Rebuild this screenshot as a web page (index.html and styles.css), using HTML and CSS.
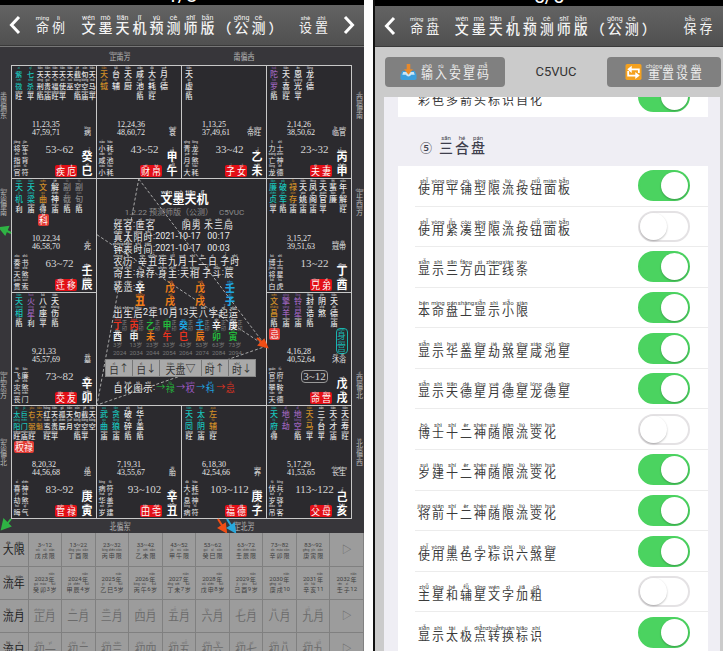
FILE: index.html
```html
<!DOCTYPE html>
<html lang="zh-CN">
<head>
<meta charset="utf-8">
<title>文墨天机</title>
<link rel="stylesheet" href="styles.css">
</head>
<body>
<main class="screens">
  <section class="screen chart-screen">
    <div class="counter">1/8</div>
    <header class="bar">
      <button class="nav" aria-label="返回"><svg viewBox="0 0 12 20"><path d="M10 2 2.500 10 10 18"/></svg></button>
      <a class="bar-link zh" href="#">命例</a>
      <h1 class="bar-title zh">文墨天机预测师版（公测）</h1>
      <a class="bar-link zh" href="#">设置</a>
      <button class="nav" aria-label="前进"><svg viewBox="0 0 12 20"><path d="M2 2 9.500 10 2 18"/></svg></button>
    </header>
    <div class="chart">
      <div class="edge edge-top"><span class="zh">正南方</span><span class="zh">南偏西</span></div>
      <div class="edge edge-side edge-left"><div class="side-group"><span class="zh">南偏东</span><span class="zh">东偏南</span></div><div class="side-group"><span class="zh">正东方</span><span class="zh">东偏北</span></div></div>
      <div class="palaces" id="palaces">
        <div class="center">
          <svg class="rays" viewBox="0 0 170 227" preserveAspectRatio="none"><path d="M42 0 170 168 0 227ZM0 56 170 168"/></svg>
          <h2 class="center-title zh">文墨天机</h2>
          <p class="version">1.2.22 预测师版（公测）&nbsp;&nbsp; C5VUC</p>
          <div class="info">
            <p><span class="zh">姓名:匿名</span><span class="zh far">阴男 木三局</span></p>
            <p class="zh">真太阳时:2021-10-17&nbsp;&nbsp; 00:17</p>
            <p class="zh">钟表时间:2021-10-17&nbsp;&nbsp; 00:03</p>
            <p class="zh">农历: 辛丑年九月十二日 子时</p>
            <p class="zh">命主:禄存 身主:天相 子斗:辰</p>
          </div>
          <div class="pillars">
            <span class="zh pillar-label">乾造:</span>
            <span class="zh pillar"><b class="white">辛</b><b class="orange">丑</b></span>
            <span class="zh pillar orange">戊戌</span>
            <span class="zh pillar orange">戊戌</span>
            <span class="zh pillar"><b class="blue">壬</b><b class="blue">子</b></span>
          </div>
          <p class="luck-title zh">出生后2年10月13天八字起运</p>
          <div class="luck" id="luck"></div>
          <div class="steps">
            <button class="zh">日↑</button><button class="zh">日↓</button><button class="zh wide">天盘▽</button><button class="zh">时↑</button><button class="zh">时↓</button>
          </div>
          <p class="legend"><span class="zh">自化图示:</span><span class="zh green">→禄</span><span class="zh purple">→权</span><span class="zh blue">→科</span><span class="zh red">→忌</span></p>
        </div>
      </div>
      <div class="edge edge-side edge-right"><div class="side-group"><span class="zh">西偏南</span><span class="zh">正西方</span></div><div class="side-group"><span class="zh">西偏北</span><span class="zh">北偏西</span></div></div>
      <div class="edge edge-bottom"><span class="zh">北偏东</span><span class="zh">正北方</span></div>
      <svg class="arrows" viewBox="0 0 364 486" preserveAspectRatio="none">
        <g stroke="#2fb344" fill="#2fb344"><path d="M11 186 5 183"/><path d="M0 181 8 180 5 187Z"/><path d="M11 472 7 477"/><path d="M2 482 4 473 10 479Z"/></g>
        <g stroke="#f04e16" fill="#f04e16"><path d="M257 291 263 296"/><path d="M267 300 259 298 264 293Z"/><path d="M218 472 223 480"/><path d="M226 485 219 481 225 477Z"/></g>
        <g stroke="#29a8dc" fill="#29a8dc"><path d="M227 472 232 480"/><path d="M235 485 228 481 234 477Z"/></g>
      </svg>
    </div>
    <table class="periods">
      <tbody id="periods"></tbody>
    </table>
  </section>

  <section class="screen settings-screen">
    <div class="counter">5/5</div>
    <header class="bar">
      <button class="nav" aria-label="返回"><svg viewBox="0 0 12 20"><path d="M10 2 2.500 10 10 18"/></svg></button>
      <a class="bar-link zh" href="#">命盘</a>
      <h1 class="bar-title zh">文墨天机预测师版（公测）</h1>
      <a class="bar-link save zh" href="#">保存</a>
    </header>
    <div class="tools">
      <button class="tool">
        <svg class="emoji" viewBox="0 0 18 18"><path d="M2 8h14l2 4v4q0 2-2 2H2q-2 0-2-2v-4z" fill="#3c9fdc"/><path d="M3 9h12l1 3h-4q-1 2-3 2t-3-2H2z" fill="#c9e6f7"/><path d="M7 0h4v6h3l-5 6-5-6h3z" fill="#e8892b"/></svg>
        <span class="zh">输入安星码</span>
      </button>
      <span class="code">C5VUC</span>
      <button class="tool">
        <svg class="emoji" viewBox="0 0 18 18"><rect width="18" height="18" rx="2" fill="#f4a11f"/><path d="M15 10V6H6M3 8v5h9" fill="none" stroke="#fff" stroke-width="2"/><path d="M7 2v8L2 6zM11 9v8l5-4z" fill="#fff"/></svg>
        <span class="zh">重置设置</span>
      </button>
    </div>
    <div class="panel">
      <div class="list list-tail">
        <div class="row"><label class="zh" for="s0">彩色多箭头标识自化</label><input id="s0" type="checkbox" checked></div>
      </div>
      <h2 class="section"><span>⑤</span><span class="zh">三合盘</span></h2>
      <div class="list list-main">
        <div class="row"><label class="zh" for="s1">使用平铺型限流按钮面板</label><input id="s1" type="checkbox" checked></div>
        <div class="row"><label class="zh" for="s2">使用紧凑型限流按钮面板</label><input id="s2" type="checkbox"></div>
        <div class="row"><label class="zh" for="s3">显示三方四正线条</label><input id="s3" type="checkbox" checked></div>
        <div class="row"><label class="zh" for="s4">本命盘上显示小限</label><input id="s4" type="checkbox" checked></div>
        <div class="row"><label class="zh" for="s5">显示华盖星劫煞星咸池星</label><input id="s5" type="checkbox" checked></div>
        <div class="row"><label class="zh" for="s6">显示天德星月德星龙德星</label><input id="s6" type="checkbox" checked></div>
        <div class="row"><label class="zh" for="s7">博士十二神随限流变化</label><input id="s7" type="checkbox"></div>
        <div class="row"><label class="zh" for="s8">岁建十二神随限流变化</label><input id="s8" type="checkbox" checked></div>
        <div class="row"><label class="zh" for="s9">将前十二神随限流变化</label><input id="s9" type="checkbox" checked></div>
        <div class="row"><label class="zh" for="s10">使用黑色字标识六煞星</label><input id="s10" type="checkbox" checked></div>
        <div class="row"><label class="zh" for="s11">主星和辅星文字加粗</label><input id="s11" type="checkbox"></div>
        <div class="row"><label class="zh" for="s12">显示太极点转换标识</label><input id="s12" type="checkbox" checked></div>
      </div>
    </div>
  </section>
</main>
<script src="app.js"></script>
</body>
</html>
```
FILE: styles.css
```css
* { box-sizing: border-box; margin: 0; padding: 0; }
html, body { height: 100%; }
body { background: #fdfdfd; overflow: hidden; font-family: Roboto, "Noto Sans CJK SC", sans-serif; font-size: 12px; }
button { font: inherit; color: inherit; border: 0; background: none; }
a { color: inherit; text-decoration: none; }

/* Characters with their pinyin above */
ruby { display: inline-flex; flex-direction: column-reverse; align-items: center; width: var(--w); vertical-align: bottom; white-space: nowrap; }
ruby > span { line-height: var(--h); height: var(--h); }
rt { display: block; font-size: var(--rt); line-height: var(--rt); height: var(--rh); font-weight: 400; }

.screens { display: grid; grid-template-columns: 364fr 350fr; column-gap: 9px; height: 100%; }
.screen { display: flex; flex-direction: column; min-width: 0; min-height: 0; overflow: hidden; }
.settings-screen { border-left: 2px solid #111; background: #cbcbcb; }
.counter { height: 6px; flex: none; background: #000; color: #fff; font-size: 20px; line-height: 20px; text-align: center; display: flex; align-items: flex-end; justify-content: center; }
.chart-screen .counter { height: 5px; }

.bar { height: 41px; flex: none; display: flex; align-items: center; justify-content: space-between; padding: 0 9px; color: #f4f4f4; background: linear-gradient(#636363, #505050); border-bottom: 1px solid #3a3a3a; }
.nav { width: 12px; height: 20px; }
.nav svg { display: block; width: 12px; height: 20px; fill: none; stroke: #fff; stroke-width: 3; }
.bar-link { --w: 16px; --h: 14px; --rt: 6px; --rh: 6px; font-size: 13px; }
.bar-title { --w: 17px; --h: 14px; --rt: 7px; --rh: 6px; font-size: 14px; font-weight: 500; white-space: nowrap; }
.bar .bar-link, .bar .bar-title { padding-bottom: 1px; }
.save { margin-left: 12px; }

/* Star chart */
.chart { position: relative; flex: none; display: grid; grid-template-columns: 11px 1fr 12px; grid-template-rows: 18px auto 14px; background: #37363a; color: #e8e8e8; border-top: 1px solid #777; }
.edge { --w: 7px; --h: 6px; --rt: 3px; --rh: 3px; font-size: 7px; color: #b8b8b8; }
.edge-top, .edge-bottom { grid-column: 1 / -1; display: flex; align-items: center; justify-content: center; gap: 103px; }
.edge-side { display: flex; flex-direction: column; justify-content: space-between; padding: 27px 0 53px; }
.edge-side .zh { width: 7px; display: flex; flex-direction: column; }
.edge-right { align-items: flex-end; padding-right: 1px; }
.side-group { display: flex; flex-direction: column; gap: 70px; }
.side-group + .side-group { gap: 40px; }
.palaces { display: grid; grid-template-columns: repeat(4, minmax(0, 1fr)); grid-template-rows: 113px 114px 113px 113px; border: solid #c8c8c8; border-width: 1px 0 0 1px; background: #2b2a2e; }
.palace { display: grid; grid-template-columns: minmax(0, 1fr); grid-template-rows: 1fr 17px 41px; border: solid #c8c8c8; border-width: 0 1px 1px 0; min-width: 0; overflow: hidden; }
.stars { display: flex; padding: 1px 0 0 1px; --w: 8px; --h: 8px; --rt: 3px; --rh: 4px; font-size: 8px; }
.star { width: 12px; flex: 0 1 auto; display: flex; flex-direction: column; align-items: center; min-width: 0; color: #e6e6e6; }
.star .zh { display: flex; flex-direction: column; font-weight: 500; }
.row8 .star { width: 10px; }
.many, .crowded { --w: 7px; font-size: 7px; }
.many .star { flex: 7 1 0; }
.many .star.major { flex: 11 1 0; }
.crowded .star { flex: 1 1 0; }
.grade { --w: 7px; --h: 7px; --rt: 3px; --rh: 3px; font-size: 7px; min-height: 10px; display: block; }
.star .teal { color: #19c5bd; }
.star .gold { color: #d08f28; }
.star .purple { color: #9c64bb; }
.star .dim { color: #858585; }
.hua { --w: 9px; --h: 9px; --rt: 3px; --rh: 3px; font-size: 9px; background: #e23a34; color: #fff; border-radius: 2px; padding: 0 1px; white-space: nowrap; display: block; }
.hua-row { display: flex; align-items: flex-start; justify-content: space-between; padding: 0 3px 0 2px; }
.top { min-height: 0; }
.body-mark { --w: 9px; --h: 9px; --rt: 3px; --rh: 3px; font-size: 9px; color: #19b5ae; border: 1px solid #19b5ae; border-radius: 4px; width: 12px; margin-left: auto; display: flex; flex-direction: column; }
.middle { display: flex; justify-content: space-between; align-items: flex-end; padding: 0 5px 0 20px; }
.ages { font: 8px/8px "Liberation Serif", serif; white-space: pre; }
.phase { --w: 7px; --h: 7px; --rt: 3px; --rh: 3px; font-size: 7px; }
.foot { display: grid; grid-template-columns: 16px 1fr 14px; padding: 4px 1px 1px 1px; }
.gods { --w: 8px; --h: 8px; --rt: 3px; --rh: 4px; font-size: 7px; display: flex; flex-direction: column; }
.gods .zh { display: flex; }
.span { display: flex; flex-direction: column; align-items: center; justify-content: space-between; padding-left: 9px; }
.range { font: 11px/13px "Liberation Serif", serif; color: #d5d5d5; padding: 0 1px; margin-top: 2px; white-space: nowrap; }
.range.boxed { border: 1px solid #999; border-radius: 4px; line-height: 11px; }
.name { --w: 11px; --h: 9px; --rt: 3px; --rh: 3px; font-size: 9px; background: #e20f16; color: #fff; border-radius: 2px; margin-left: 13px; white-space: nowrap; }
.stem { --w: 12px; --h: 10px; --rt: 4px; --rh: 4px; font-size: 11px; font-weight: 700; color: #fff; display: flex; flex-direction: column; justify-content: flex-end; }

.center { grid-area: 2 / 2 / 4 / 4; position: relative; border: solid #c8c8c8; border-width: 0 1px 1px 0; padding: 10px 10px 0 16px; --w: 10px; --h: 8px; --rt: 4px; --rh: 4px; font-size: 9px; line-height: 12px; color: #ededed; }
.center > * { position: relative; }
.center .rays { position: absolute; inset: 0; width: 100%; height: 100%; fill: none; stroke: #a8a8a8; stroke-width: 1; stroke-dasharray: 3 2; }
.center-title { --w: 12px; --h: 13px; --rt: 6px; --rh: 5px; font-size: 12px; font-weight: 700; line-height: 18px; color: #fff; text-align: center; }
.version { font-size: 8px; line-height: 11px; color: #8d8d8d; text-align: center; white-space: nowrap; }
.info p, .luck-title, .legend { white-space: nowrap; height: 12px; }
.info .far { margin-left: 26px; }
.pillars { display: flex; padding-top: 2px; gap: 20px; height: 28px; }
.pillars .zh { --h: 9px; }
.pillar-label { width: 22px; margin-right: -20px; white-space: nowrap; }
.pillar { display: flex; flex-direction: column; width: 10px; font-size: 10px; font-weight: 700; }
.pillar b { display: block; height: 13px; }
.luck { display: grid; grid-template-columns: repeat(8, 1fr); width: 132px; padding-top: 1px; }
.cycle { --w: 9px; --h: 8px; --rt: 3px; --rh: 3px; line-height: 8px; }
.cycle-main { display: flex; }
.cycle-main .zh { display: flex; flex-direction: column; font-weight: 700; }
.cycle-main .ten { font-size: 5px; line-height: 6px; color: #888; }
.cycle small { display: block; font-size: 6px; line-height: 8px; color: #777; }
.steps { display: flex; margin: 2px 0 4px -8px; width: 151px; background: #a9a9a9; border: 1px solid #888; color: #333; }
.steps button { flex: 27; height: 16px; border-right: 1px solid #777; --h: 9px; --w: 10px; font-size: 10px; }
.steps .wide { flex: 42; }
.steps button:last-child { border: 0; }
.legend { display: flex; gap: 1px; }
.white { color: #eee; } .orange { color: #ee7d1a; } .blue { color: #20a5e0; } .red { color: #e8331f; } .green { color: #24b83c; } .purple { color: #a05cc8; }
.arrows { position: absolute; inset: 0; width: 100%; height: 100%; stroke-width: 2; pointer-events: none; }

/* Periods */
.periods { width: 100%; table-layout: fixed; border-collapse: collapse; background: #9c9c9c; color: #404040; flex: none; }
.periods th { width: 28px; --w: 11px; --h: 12px; --rt: 4px; --rh: 4px; font-size: 11px; font-weight: 400; color: #222; }
.periods th, .periods td { height: 33px; border: solid #808080; border-width: 0 1px 1px 0; text-align: center; vertical-align: middle; white-space: nowrap; overflow: hidden; }
.periods td { --w: 7px; --h: 7px; --rt: 3px; --rh: 3px; font-size: 6px; line-height: 9px; }
.periods .month { --w: 11px; --h: 12px; --rt: 4px; --rh: 4px; font-size: 11px; color: #6b6b6b; line-height: 16px; }
.periods .next { font-size: 10px; color: #666; }

/* Settings */
.tools { height: 50px; flex: none; display: flex; align-items: center; justify-content: space-between; padding: 0 2px 0 10px; }
.tool { height: 30px; border-radius: 4px; background: #808080; color: #eee; display: flex; align-items: center; justify-content: center; gap: 3px; width: 120px; --w: 14px; --h: 13px; --rt: 6px; --rh: 6px; font-size: 12px; }
.code + .tool { width: 114px; gap: 5px; }
.emoji { width: 17px; height: 16px; }
.code { font-size: 13px; line-height: 16px; color: #333; }
.panel { flex: 1; min-height: 0; margin: 0 3px 0 9px; padding: 0 12px 0 14px; background: #efeef4; display: flex; flex-direction: column; }
.list { background: #fff; }
.list-tail { flex: none; height: 20px; overflow: hidden; display: flex; align-items: flex-end; }
.list-tail .row { flex: 1; height: 41px; border: 0; }
.section { flex: none; height: 49px; padding: 8px 0 0 22px; display: flex; align-items: center; gap: 6px; --w: 16px; --h: 15px; --rt: 6px; --rh: 6px; font-size: 14px; font-weight: 500; color: #3f3f4d; }
.section > span:first-child { font-size: 12px; padding-top: 4px; }
.list-main { flex: 1; min-height: 0; margin-bottom: -2px; display: grid; grid-template-rows: repeat(12, 1fr); }
.row { margin-left: 17px; padding: 0 18px 0 2px; display: flex; align-items: center; justify-content: space-between; border-bottom: 1px solid #ececec; min-height: 0; }
.row label { --w: 14px; --h: 13px; --rt: 6px; --rh: 6px; font-size: 12px; color: #3a3a3a; white-space: nowrap; padding-top: 4px; }
.row input { appearance: none; flex: none; width: 52px; height: 31px; border-radius: 16px; border: 2px solid #e4e2e4; background: #fff; display: flex; }
.row input::before { content: ""; width: 27px; height: 27px; border-radius: 50%; background: #fff; box-shadow: 0 1px 2px #0004; }
.row input:checked { background: #4bd360; border-color: #4bd360; justify-content: flex-end; }
```
FILE: app.js
```js
const PINYIN = {};
("命mìng 例lì 文wén 墨mò 天tiān 机jī 预yù 测cè 师shī 版bǎn 公gōng 设shè 置zhì 盘pán 保bǎo 存cún 输shū 入rù 安ān 星xīng 码mǎ 重chóng " +
 "彩cǎi 色sè 多duō 箭jiàn 头tóu 标biāo 识shí 自zì 化huà 三sān 合hé 使shǐ 用yòng 平píng 铺pù 型xíng 限xiàn 流liú 按àn 钮niǔ 面miàn 板bǎn " +
 "紧jǐn 凑còu 显xiǎn 示shì 方fāng 四sì 正zhèng 线xiàn 条tiáo 本běn 上shàng 小xiǎo 华huá 盖gài 劫jié 煞shà 咸xián 池chí 德dé 月yuè 龙lóng " +
 "博bó 士shì 十shí 二èr 神shén 随suí 变biàn 岁suì 建jiàn 将jiàng 前qián 黑hēi 字zì 六liù 主zhǔ 和hé 辅fǔ 加jiā 粗cū 太tài 极jí 点diǎn " +
 "转zhuǎn 换huàn 南nán 偏piān 西xī 东dōng 北běi 姓xìng 名míng 匿nì 阴yīn 男nán 木mù 局jú 真zhēn 阳yáng 时shí 钟zhōng 表biǎo 间jiān 农nóng " +
 "历lì 辛xīn 丑chǒu 年nián 九jiǔ 日rì 子zǐ 禄lù 身shēn 相xiàng 斗dǒu 辰chén 乾qián 造zào 戊wù 戌xū 壬rén 出chū 生shēng 后hòu 八bā 起qǐ " +
 "运yùn 图tú 权quán 科kē 忌jì 丁dīng 酉yǒu 丙bǐng 申shēn 乙yǐ 未wèi 甲jiǎ 午wǔ 癸guǐ 巳sì 卯mǎo 庚gēng 寅yín 己jǐ 亥hài 大dà 一yī " +
 "五wǔ 七qī 初chū 紫zǐ 微wēi 杀shā 旺wàng 刑xíng 陷xiàn 马mǎ 福fú 巫wū 空kōng 截jié 旬xún 破pò 碎suì 庙miào 贵guì 官guān 符fú 指zhǐ 背bèi " +
 "军jūn 病bìng 疾jí 厄è 钺yuè 台tái 厨chú 耗hào 衰shuāi 财cái 帛bó 虚xū 青qīng 帝dì 女nǚ 陀tuó 罗luó 喜xǐ 恩ēn 光guāng 力lì 亡wáng 临lín " +
 "夫fū 妻qī 梁liáng 曲qǔ 解jiě 副fù 利lì 得dé 奏zòu 书shū 贯guàn 索suǒ 死sǐ 迁qiān 移yí 廉lián 贞zhēn 姚yáo 凤fèng 阁gé 蜚fēi 冠guān 带dài " +
 "白bái 虎hǔ 兄xiōng 弟dì 火huǒ 座zuò 伤shāng 飞fēi 灾zāi 丧sàng 门mén 墓mù 交jiāo 友yǒu 昌chāng 擎qíng 羊yáng 铃líng 封fēng 诰gào 府fǔ " +
 "攀pān 鞍ān 沐mù 浴yù 宫gōng 巨jù 右yòu 弼bì 魁kuí 红hóng 鸾luán 孤gū 晦huì 气qì 绝jué 武wǔ 贪tān 狼láng 胎tāi 田tián 宅zhái " +
 "同tóng 左zuǒ 息xī 养yǎng 地dì 才cái 寿shòu 伏fú 兵bīng 驿yì 吊diào 客kè 长zhǎng 父fù 母mǔ")
  .split(" ").forEach(e => { PINYIN[e[0]] = e.slice(1); });

const el = (cls, html = "", tag = "div") => `<${tag} class="${cls}">${html}</${tag}>`;
const zh = (text, cls = "") => el("zh " + cls, text, "span");

/* Stars: name, grade, colour */
const palaces = [
  { at: "1/1", stars: "紫微旺teal 七杀平teal 天刑陷 天贵庙 天福旺 天使平 天巫 截空陷 旬空庙 天马平", ages: "11,23,35\n47,59,71", phase: "病", gods: "将军 指背 官符", range: "53~62", name: "疾厄", stem: "癸巳", mode: "many" },
  { at: "1/2", stars: "天钺-gold 台辅 天厨 咸池陷 大耗旺 月德", ages: "12,24,36\n48,60,72", phase: "衰", gods: "小耗 咸池 小耗", range: "43~52", name: "财帛", stem: "甲午" },
  { at: "1/3", stars: "天虚陷", ages: "1,13,25\n37,49,61", phase: "帝旺", gods: "青龙 月煞 大耗", range: "33~42", name: "子女", stem: "乙未" },
  { at: "1/4", stars: "陀罗陷purple 天喜旺 恩光平 龙德", ages: "2,14,26\n38,50,62", phase: "临官", gods: "力士 亡神 龙德", range: "23~32", name: "夫妻", stem: "丙申" },
  { at: "2/1", stars: "天机利teal 天梁庙teal 文曲得gold 解神庙 副截陷dim 副旬陷dim", hua: "科", huaAt: 2, ages: "10,22,34\n46,58,70", phase: "死", gods: "奏书 天煞 贯索", range: "63~72", name: "迁移", stem: "壬辰" },
  { at: "2/4", stars: "廉贞平teal 破军陷teal 禄存庙gold 天姚庙 凤阁庙 天官平 蜚廉 年解旺", mode: "row8", ages: "3,15,27\n39,51,63", phase: "冠带", gods: "博士 将星 白虎", range: "13~22", name: "兄弟", stem: "丁酉" },
  { at: "3/1", stars: "天相陷teal 火星利purple 八座平 天伤陷", ages: "9,21,33\n45,57,69", phase: "墓", gods: "飞廉 灾煞 丧门", range: "73~82", name: "交友", stem: "辛卯" },
  { at: "3/4", stars: "文昌陷gold 擎羊庙purple 铃星庙purple 封诰陷 阴煞 天德庙", hua: "忌", huaAt: 0, body: true, ages: "4,16,28\n40,52,64", phase: "沐浴", gods: "官府 攀鞍 天德", range: "3~12", boxed: true, name: "命宫", stem: "戊戌" },
  { at: "4/1", stars: "太阳旺teal 巨门庙teal 右弼旺gold 天魁-gold 红鸾旺 天贵平 孤辰 天月 旬空陷 截空平 天空", mode: "crowded", hua: "权禄", huaAt: 0, ages: "8,20,32\n44,56,68", phase: "绝", gods: "喜神 劫煞 晦气", range: "83~92", name: "官禄", stem: "庚寅" },
  { at: "4/2", stars: "武曲庙teal 贪狼庙teal 破碎陷 华盖陷", ages: "7,19,31\n43,55,67", phase: "胎", gods: "病符 华盖 岁建", range: "93~102", name: "田宅", stem: "辛丑" },
  { at: "4/3", stars: "天同旺teal 太阴庙teal 左辅旺gold", ages: "6,18,30\n42,54,66", phase: "养", gods: "大耗 息神 病符", range: "103~112", name: "福德", stem: "庚子" },
  { at: "4/4", stars: "天府得teal 地劫-purple 地空陷purple 天马平gold 三台平 天才庙 天寿旺", ages: "5,17,29\n41,53,65", phase: "长生", gods: "伏兵 岁驿 吊客", range: "113~122", name: "父母", stem: "己亥" }
];

document.getElementById("palaces").insertAdjacentHTML("beforeend", palaces.map(p => {
  const stars = p.stars.split(" ").map(s => {
    const grade = (s[2] || "-") === "-" ? "" : s[2];
    const colour = s.slice(3);
    return el("star" + (colour ? " major" : ""), zh(s.slice(0, 2), colour) + zh(grade, "grade"));
  }).join("");
  const indent = p.huaAt ? `<span style="width:${p.huaAt * 12}px"></span>` : "";
  const marks = p.hua ? `<div class="hua-row"><span style="display:flex">${indent}${zh(p.hua, "hua")}</span>${p.body ? zh("身宫", "body-mark") : ""}</div>` : "";
  return `<article class="palace" style="grid-area:${p.at}">` +
    el("top", el("stars " + (p.mode || ""), stars) + marks) +
    el("middle", el("ages", p.ages) + zh(p.phase, "phase")) +
    el("foot", el("gods", p.gods.split(" ").map(g => zh(g)).join("")) +
      el("span", el("range" + (p.boxed ? " boxed" : ""), p.range) + zh(p.name, "name")) +
      zh(p.stem, "stem")) + "</article>";
}).join(""));

const cycles = "丁red酉white 丙red申white 乙green未orange 甲green午red 癸blue巳red 壬blue辰orange 辛white卯green 庚white寅green".split(" ");
document.getElementById("luck").innerHTML = cycles.map((c, i) => {
  const [, a, ac, b, bc] = c.match(/(.)([a-z]+)(.)([a-z]+)/);
  return el("cycle", el("cycle-main", el("", zh(a, ac) + zh(b, bc)) + el("ten", "正<br>印")) +
    `<small>${3 + i * 10}岁</small><small>${2024 + i * 10}</small>`);
}).join("");

const next = '<td class="next">▷</td>';
const decades = "戊戌 丁酉 丙申 乙未 甲午 癸巳 壬辰 辛卯 庚寅".split(" ");
const years = "癸卯3岁 甲辰4岁 乙巳5岁 丙午6岁 丁未7岁 戊申8岁 己酉9岁 庚戌10 辛亥11 壬子12".split(" ");
const numerals = [..."一二三四五六七八九"];
const row = (head, cells) => `<tr><th class="zh" scope="row">${head}</th>${cells}</tr>`;
document.getElementById("periods").innerHTML =
  row("大限", decades.map((d, i) => `<td>${3 + i * 10}~${12 + i * 10}<br>${zh(d + "限")}</td>`).join("") + next) +
  row("流年", years.map((y, i) => `<td>${zh(2023 + i + "年")}<br>${zh(y)}</td>`).join("")) +
  row("流月", numerals.map((n, i) => `<td class="month zh">${i ? n : "正"}月</td>`).join("") + next) +
  row("流日", numerals.map(n => `<td class="month zh">初${n}</td>`).join("") + next);

/* Put the pinyin above every character inside .zh */
const annotate = node => {
  if (node.nodeType === 3) {
    const holder = document.createElement("template");
    holder.innerHTML = [...node.data].map(ch =>
      PINYIN[ch] ? `<ruby><span>${ch}</span><rt>${PINYIN[ch]}</rt></ruby>`
        : ch === "（" || ch === "）" ? `<ruby><span>${ch}</span></ruby>` : ch).join("");
    node.replaceWith(holder.content);
  } else {
    [...node.childNodes].forEach(annotate);
  }
};
document.querySelectorAll(".zh").forEach(annotate);
```
